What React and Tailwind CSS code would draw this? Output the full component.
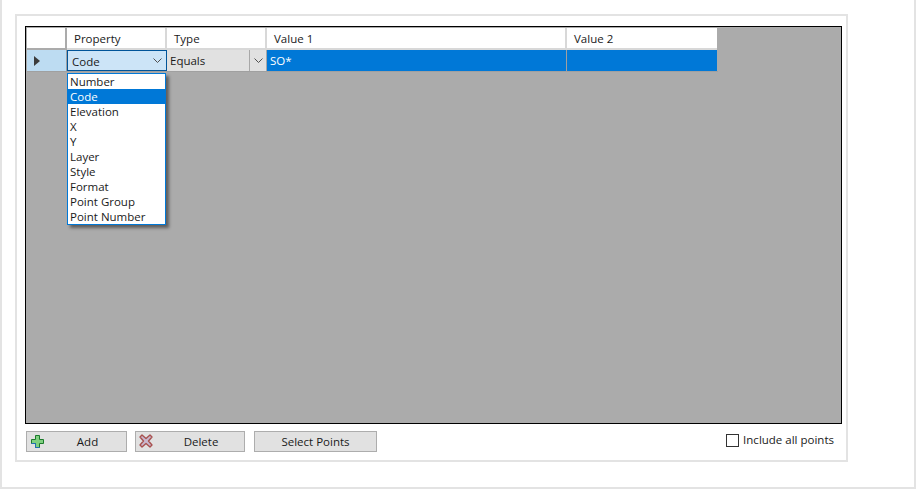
const font = { fontFamily: '"Open Sans", "Noto Sans", sans-serif' };
const items = ["Number","Code","Elevation","X","Y","Layer","Style","Format","Point Group","Point Number"];

function Chevron({ className }) {
  return (
    <svg width="9" height="5" viewBox="0 0 9 5" className={className} fill="none">
      <path d="M0.5 0.5 L4.5 4.5 L8.5 0.5" stroke="#505050" strokeWidth="1" />
    </svg>
  );
}

function Plus() {
  return (
    <svg width="13" height="13" viewBox="0 0 13 13">
      <path d="M4.5 .5h4v4h4v4h-4v4h-4v-4h-4v-4h4z" fill="#7fd07f" stroke="#1b7a2b" strokeWidth="1" />
      <path d="M.5 8.5h4v4h4" fill="none" stroke="#1f6fb5" strokeWidth="1" />
    </svg>
  );
}

function Cross() {
  return (
    <svg width="14" height="14" viewBox="0 0 14 14">
      <path d="M1 3 L3 1 L7 4.5 L11 1 L13 3 L9.5 7 L13 11 L11 13 L7 9.5 L3 13 L1 11 L4.5 7 Z" fill="#c9b8cf" stroke="#a8514f" strokeWidth="1.4" strokeLinejoin="round" />
    </svg>
  );
}

export default function App() {
  return (
    <div style={font} className="w-[916px] h-[489px] bg-white text-[11.5px] leading-[15px] text-[#1a1a1a] overflow-hidden">
      <div className="w-[916px] h-[489px] border-l-2 border-r-2 border-b-2 border-[#e3e3e3] pt-[14px] pl-[13px]">
        <div className="w-[833px] h-[448px] border-2 border-[#e3e3e3] pt-[10px] pl-[8px]">
          <div className="w-[817px] h-[398px] border border-black bg-[#ababab] pt-px pl-px">
            <div className="flex h-[22px] w-[691px]">
              <div className="w-[40px] bg-white border-r-2 border-b-2 border-[#ababab]" />
              <div className="w-[100px] bg-white border-r-2 border-b-2 border-[#d8d8d8] pl-[7px] pt-[3px]">Property</div>
              <div className="w-[100px] bg-white border-r-2 border-b-2 border-[#d8d8d8] pl-[7px] pt-[3px]">Type</div>
              <div className="w-[300px] bg-white border-r-2 border-b-2 border-[#d8d8d8] pl-[7px] pt-[3px]">Value 1</div>
              <div className="w-[150px] bg-white border-b-2 border-[#d8d8d8] pl-[7px] pt-[3px]">Value 2</div>
            </div>
            <div className="flex h-[22px] w-[691px] border-b border-[#a0a0a0]">
              <div className="w-[40px] bg-[#bddcf2] border-r border-[#a0a0a0] flex items-center pl-[7px]">
                <svg width="6" height="10" viewBox="0 0 6 10"><path d="M0 0 L6 5 L0 10 Z" fill="#3c3c3c" /></svg>
              </div>
              <div className="relative w-[100px] bg-[#cce4f7] border border-[#005499] flex items-center justify-between pl-[4px] pr-[4px]">
                <span className="pt-px">Code</span>
                <Chevron />
                <div className="absolute left-[-1px] top-[22px] z-10 w-[99px] bg-white border border-[#0078d7] shadow-[3px_3px_3px_rgba(0,0,0,0.45)]">
                  {items.map((t) => (
                    <div key={t} className={`h-[15px] pl-[2px] whitespace-nowrap ${t === "Code" ? "bg-[#0078d7] text-white" : ""}`}>{t}</div>
                  ))}
                </div>
              </div>
              <div className="w-[100px] bg-[#e1e1e1] border-r border-[#a8a8a8] flex">
                <div className="flex-1 pl-[3px] pt-[3px]">Equals</div>
                <div className="w-[17px] border-l border-[#a8a8a8] flex items-center justify-center"><Chevron /></div>
              </div>
              <div className="w-[300px] bg-[#0078d7] border-r border-[#a0a0a0] text-white pl-[3px] pt-[3px]">SO*</div>
              <div className="w-[150px] bg-[#0078d7]" />
            </div>
          </div>
          <div className="flex items-start w-[817px] mt-[7px] pl-px">
            <button className="relative w-[101px] h-[21px] bg-[#e1e1e1] border border-[#adadad] text-center pl-[22px]">
              <span className="absolute left-[4px] top-[3px]"><Plus /></span>Add
            </button>
            <button className="relative ml-[8px] w-[110px] h-[21px] bg-[#e1e1e1] border border-[#adadad] text-center pl-[22px]">
              <span className="absolute left-[3px] top-[2px]"><Cross /></span>Delete
            </button>
            <button className="ml-[9px] w-[123px] h-[21px] bg-[#e1e1e1] border border-[#adadad] text-center">Select Points</button>
            <div className="ml-auto flex items-center mr-[8px] mt-[1px]">
              <div className="w-[13px] h-[13px] border border-[#333] mr-[4px] mt-[1px]" />
              <span>Include all points</span>
            </div>
          </div>
        </div>
      </div>
    </div>
  );
}
